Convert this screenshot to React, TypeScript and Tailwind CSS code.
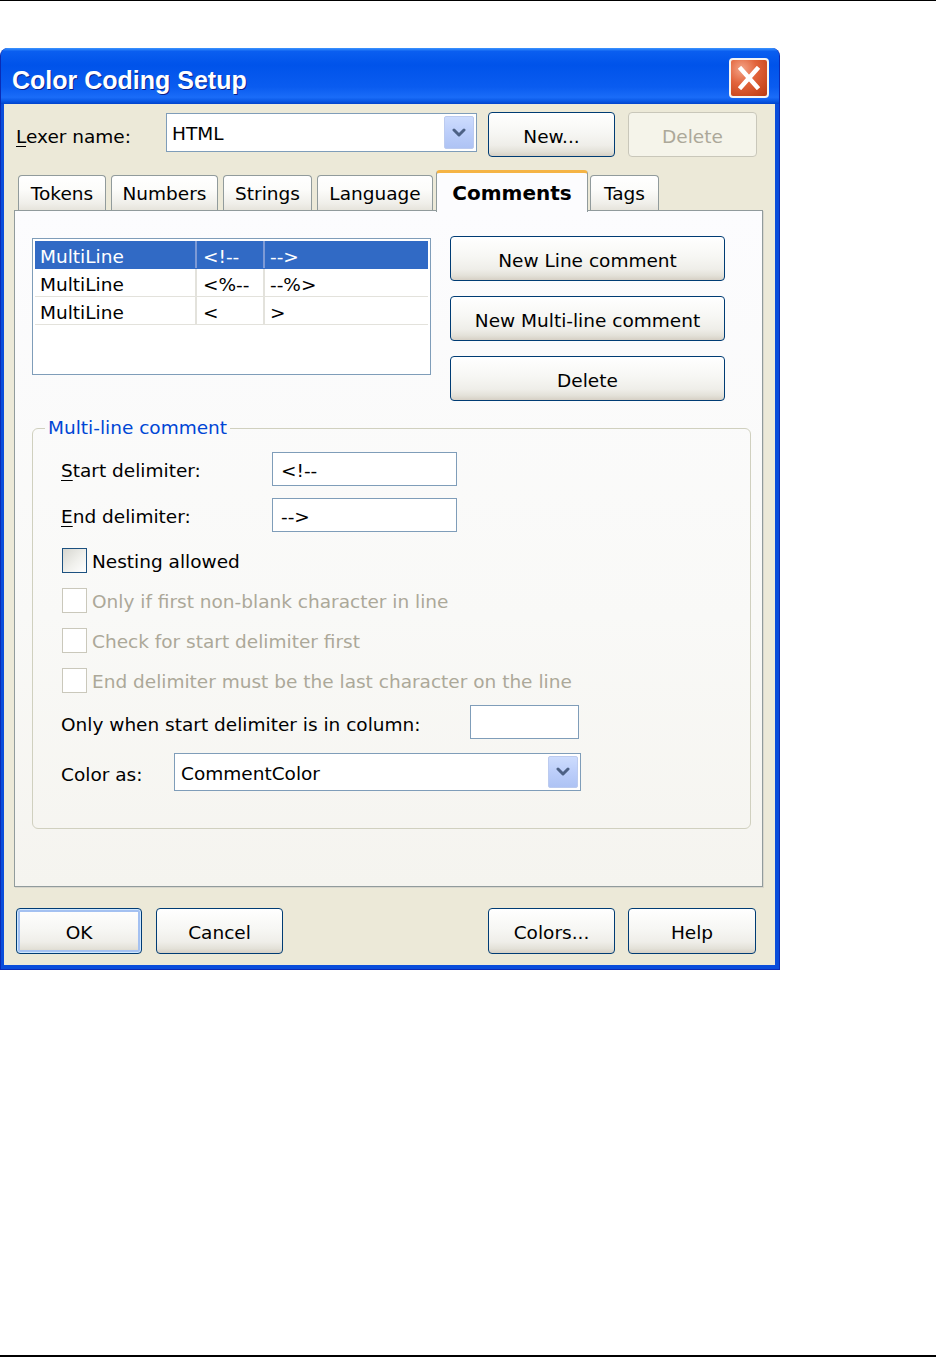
import React from "react";

const btnBase =
  "flex items-center justify-center rounded-[4px] border text-[18.5px] leading-[22px] shrink-0 pt-[4px]";
const btnEnabled =
  "border-[#003c74] text-black bg-[linear-gradient(180deg,#ffffff_0%,#f7f7f4_45%,#efeee9_75%,#e3e1d8_90%,#d6d0c5_100%)]";
const btnDisabled = "border-[#c9c7ba] text-[#aca899] bg-[#f5f4ea]";

function XPButton({
  children,
  className = "",
  disabled = false,
  isDefault = false,
}: {
  children: React.ReactNode;
  className?: string;
  disabled?: boolean;
  isDefault?: boolean;
}) {
  return (
    <div
      className={[
        btnBase,
        disabled ? btnDisabled : btnEnabled,
        isDefault
          ? "shadow-[inset_0_0_0_1px_#cee7ff,inset_0_0_0_3px_#a4c1f1]"
          : "",
        className,
      ].join(" ")}
    >
      {children}
    </div>
  );
}

function DropButton() {
  return (
    <div className="w-[30px] h-full rounded-[2px] border border-[#bccbef] bg-[linear-gradient(180deg,#cddcfd_0%,#bccefa_50%,#aec3f4_100%)] flex items-center justify-center">
      <svg width="14" height="10" viewBox="0 0 14 10">
        <path
          d="M2 2 L7 7 L12 2"
          fill="none"
          stroke="#4d6185"
          strokeWidth="3"
          strokeLinecap="round"
          strokeLinejoin="round"
        />
      </svg>
    </div>
  );
}

function Checkbox({ label, disabled = false }: { label: string; disabled?: boolean }) {
  return (
    <div className="flex items-center h-[26px] pl-[29px]">
      <div
        className={
          disabled
            ? "w-[25px] h-[25px] border border-[#cac8bb] bg-white"
            : "w-[25px] h-[25px] border border-[#1c5180] bg-[linear-gradient(135deg,#d6d6d0_0%,#f0f0ec_55%,#ffffff_100%)]"
        }
      />
      <span className={disabled ? "ml-[5px] pt-[4px] text-[#aca899]" : "ml-[5px] pt-[4px] text-black"}>{label}</span>
    </div>
  );
}

const tabs = [
  { label: "Tokens", cls: "ml-[14px] w-[88px]" },
  { label: "Numbers", cls: "ml-[5px] w-[107px]" },
  { label: "Strings", cls: "ml-[5px] w-[89px]" },
  { label: "Language", cls: "ml-[5px] w-[116px]" },
];

const rows = [
  { a: "MultiLine", b: "<!--", c: "-->", sel: true },
  { a: "MultiLine", b: "<%--", c: "--%>", sel: false },
  { a: "MultiLine", b: "<", c: ">", sel: false },
];

export default function App() {
  return (
    <div className="w-[936px] h-[1357px] bg-white flex flex-col font-['DejaVu_Sans',sans-serif] text-[18.5px] leading-[22px] text-black">
      <div className="h-[1px] bg-black shrink-0" />
      <div className="h-[47px] shrink-0" />

      {/* Dialog */}
      <div className="w-[780px] h-[922px] shrink-0 flex flex-col rounded-t-[8px] overflow-hidden bg-[#0a4ddb] border-x border-b border-[#0a2bb5]">
        {/* Title bar */}
        <div className="h-[56px] shrink-0 flex items-start justify-between bg-[linear-gradient(180deg,#3d95ff_0%,#0a5ef0_6%,#0053ea_30%,#0a5cf0_70%,#1a6cf8_88%,#0a5ae8_94%,#0043cc_100%)]">
          <div className="mt-[17px] ml-[11px] font-['Liberation_Sans',sans-serif] font-bold text-[25px] leading-[30px] text-white [text-shadow:1px_1px_0_#0a1e8a]">
            Color Coding Setup
          </div>
          <div className="mt-[10px] mr-[10px] w-[40px] h-[40px] rounded-[4px] border-2 border-[#f4f4f4] bg-[radial-gradient(circle_at_30%_25%,#f4a488_0%,#e2643c_40%,#cc4a20_75%,#b83a14_100%)] flex items-center justify-center">
            <svg width="26" height="24" viewBox="0 0 26 24">
              <path d="M5 3 L21 21 M21 3 L5 21" stroke="white" strokeWidth="4.5" strokeLinecap="square" />
            </svg>
          </div>
        </div>

        {/* Client area */}
        <div className="flex-1 ml-[3px] mr-[4px] mb-[4px] bg-[#ece9d8] flex flex-col">
          {/* Lexer row */}
          <div className="mt-[8px] h-[45px] flex items-start pl-[12px]">
            <div className="w-[150px] h-[45px] flex items-center pt-[4px]">
              <span>
                <u className="underline-offset-[3px]">L</u>exer name:
              </span>
            </div>
            <div className="mt-[1px] w-[311px] h-[39px] border border-[#7f9db9] bg-white flex items-stretch p-[2px]">
              <div className="flex-1 flex items-center pl-[3px] pt-[3px]">HTML</div>
              <DropButton />
            </div>
            <XPButton className="ml-[11px] w-[127px] h-[45px]">New...</XPButton>
            <XPButton disabled className="ml-[13px] w-[129px] h-[45px]">
              Delete
            </XPButton>
          </div>

          {/* Tabs */}
          <div className="mt-[13px] h-[40px] flex items-end">
            {tabs.map((t) => (
              <div
                key={t.label}
                className={
                  t.cls +
                  " h-[35px] pt-[2px] rounded-t-[4px] border-x border-t border-[#919b9c] bg-[linear-gradient(180deg,#ffffff_0%,#fcfcfa_40%,#f0efea_80%,#e6e4dc_100%)] flex items-center justify-center"
                }
              >
                {t.label}
              </div>
            ))}
            <div className="relative z-10 ml-[3px] w-[152px] h-[42px] -mb-[2px] rounded-t-[4px] border-x border-[#919b9c] border-t-[3px] border-t-[#f5b445] bg-[#fcfcfe] flex items-center justify-center font-bold text-[20px]">
              Comments
            </div>
            <div className="ml-[2px] w-[69px] h-[35px] pt-[2px] rounded-t-[4px] border-x border-t border-[#919b9c] bg-[linear-gradient(180deg,#ffffff_0%,#fcfcfa_40%,#f0efea_80%,#e6e4dc_100%)] flex items-center justify-center">
              Tags
            </div>
          </div>

          {/* Tab panel */}
          <div className="ml-[10px] w-[749px] h-[677px] border border-[#919b9c] shadow-[1px_1px_0_#d8d6cc] bg-[linear-gradient(180deg,#fcfcfe_0%,#f9f9f7_60%,#f5f4ef_100%)] pl-[17px] pt-[25px]">
            <div className="flex items-start">
              {/* List view */}
              <div className="mt-[2px] w-[399px] h-[137px] border border-[#7f9db9] bg-white pl-[2px] pt-[2px] pr-[2px]">
                {rows.map((r, i) => (
                  <div
                    key={i}
                    className={
                      r.sel
                        ? "h-[28px] flex bg-[#316ac5] text-white border-b border-[#316ac5]"
                        : "h-[28px] flex text-black border-b border-[#e3e2dc]"
                    }
                  >
                    <div
                      className={
                        r.sel
                          ? "w-[162px] pl-[5px] pt-[4px] flex items-center border-r-2 border-[#7d9ad6]"
                          : "w-[162px] pl-[5px] pt-[4px] flex items-center border-r-2 border-[#e3e2dc]"
                      }
                    >
                      {r.a}
                    </div>
                    <div
                      className={
                        r.sel
                          ? "w-[68px] pl-[6px] pt-[4px] flex items-center border-r-2 border-[#7d9ad6]"
                          : "w-[68px] pl-[6px] pt-[4px] flex items-center border-r-2 border-[#e3e2dc]"
                      }
                    >
                      {r.b}
                    </div>
                    <div className="flex-1 pl-[5px] pt-[4px] flex items-center">{r.c}</div>
                  </div>
                ))}
              </div>

              {/* Side buttons */}
              <div className="ml-[19px] flex flex-col gap-[15px]">
                <XPButton className="w-[275px] h-[45px]">New Line comment</XPButton>
                <XPButton className="w-[275px] h-[45px]">New Multi-line comment</XPButton>
                <XPButton className="w-[275px] h-[45px]">Delete</XPButton>
              </div>
            </div>

            {/* Group box */}
            <fieldset className="mt-[16px] w-[719px] border border-[#d0d0bf] rounded-[6px] p-0 pb-[37px]">
              <legend className="ml-[12px] px-[3px] text-[#0046d5] leading-[22px]">
                Multi-line comment
              </legend>

              <div className="mt-[13px] h-[34px] flex items-center pl-[28px]">
                <div className="w-[211px] pt-[4px]">
                  <u className="underline-offset-[3px]">S</u>tart delimiter:
                </div>
                <div className="w-[185px] h-[34px] border border-[#7f9db9] bg-white flex items-center pl-[8px] pt-[3px]">
                  {"<!--"}
                </div>
              </div>

              <div className="mt-[12px] h-[34px] flex items-center pl-[28px]">
                <div className="w-[211px] pt-[4px]">
                  <u className="underline-offset-[3px]">E</u>nd delimiter:
                </div>
                <div className="w-[185px] h-[34px] border border-[#7f9db9] bg-white flex items-center pl-[8px] pt-[3px]">
                  {"-->"}
                </div>
              </div>

              <div className="mt-[15px] flex flex-col gap-[14px]">
                <Checkbox label="Nesting allowed" />
                <Checkbox label="Only if first non-blank character in line" disabled />
                <Checkbox label="Check for start delimiter first" disabled />
                <Checkbox label="End delimiter must be the last character on the line" disabled />
              </div>

              <div className="mt-[12px] h-[34px] flex items-center pl-[28px]">
                <div className="w-[409px] pt-[5px]">Only when start delimiter is in column:</div>
                <div className="w-[109px] h-[34px] border border-[#7f9db9] bg-white" />
              </div>

              <div className="mt-[14px] h-[38px] flex items-center pl-[28px]">
                <div className="w-[113px] pt-[5px]">Color as:</div>
                <div className="w-[407px] h-[38px] border border-[#7f9db9] bg-white flex items-stretch p-[2px]">
                  <div className="flex-1 flex items-center pl-[4px] pt-[4px]">CommentColor</div>
                  <DropButton />
                </div>
              </div>
            </fieldset>
          </div>

          {/* Bottom buttons */}
          <div className="mt-[21px] h-[46px] flex items-start pl-[12px]">
            <XPButton isDefault className="w-[126px] h-[46px]">
              OK
            </XPButton>
            <XPButton className="ml-[14px] w-[127px] h-[46px]">Cancel</XPButton>
            <div className="flex-1" />
            <XPButton className="w-[127px] h-[46px]">Colors...</XPButton>
            <XPButton className="ml-[13px] w-[128px] h-[46px] mr-[19px]">Help</XPButton>
          </div>
        </div>
      </div>

      <div className="flex-1" />
      <div className="h-[2px] bg-black shrink-0" />
    </div>
  );
}
